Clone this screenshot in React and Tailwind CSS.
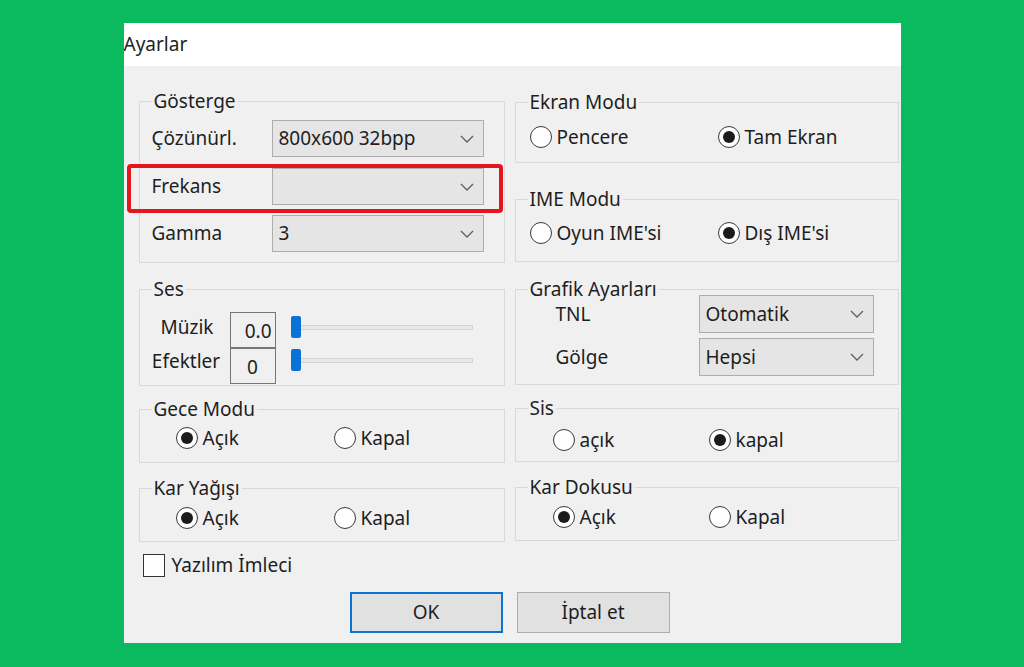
const FONT = { fontFamily: '"Noto Sans", "Open Sans", sans-serif' };

function Chevron() {
  return (
    <svg width="14" height="8" viewBox="0 0 14 8" fill="none">
      <path d="M1 1l6 6 6-6" stroke="#5f5f5f" strokeWidth="1.3" />
    </svg>
  );
}

function Select({ value, className = "" }) {
  return (
    <div
      className={
        "flex items-center justify-between border border-[#adadad] bg-[#e5e5e5] pl-[6px] pr-[9px] text-[19px] text-[#1e1e1e] " +
        className
      }
    >
      <span>{value}</span>
      <Chevron />
    </div>
  );
}

function Radio({ label, checked }) {
  return (
    <div className="flex items-center gap-[5px] h-[24px]">
      <span className="w-[22px] h-[22px] rounded-full border-[1.5px] border-[#3a3a3a] bg-white flex items-center justify-center">
        {checked && <span className="w-[12px] h-[12px] rounded-full bg-[#1b1b1b]" />}
      </span>
      <span className="text-[19px] text-[#1e1e1e] leading-none">{label}</span>
    </div>
  );
}

function Group({ title, className = "", children }) {
  return (
    <fieldset className={"border border-[#d9d9d9] " + className}>
      <legend className="ml-[12px] px-[2px] text-[19px] leading-[22px] text-[#1e1e1e]">{title}</legend>
      {children}
    </fieldset>
  );
}

function RadioPair({ a, b, first, pl, w, mt }) {
  return (
    <div className={"flex " + pl + " " + mt}>
      <div className={w}>
        <Radio label={a} checked={first} />
      </div>
      <Radio label={b} checked={!first} />
    </div>
  );
}

function Slider() {
  return (
    <div className="relative w-[182px] h-[22px] flex items-center">
      <div className="w-full h-[5px] bg-[#e7e7e7] border border-[#d4d4d4]" />
      <div className="absolute left-0 top-0 w-[10px] h-[22px] bg-[#0a74d6] rounded-[2px]" />
    </div>
  );
}

export default function App() {
  return (
    <div className="min-h-screen bg-[#0bb95f] flex justify-center pt-[23px]" style={FONT}>
      <div className="w-[777px] h-[620px] flex flex-col overflow-hidden">
        <div className="h-[43px] bg-white flex items-center text-[19px] text-[#222]">
          <span>Ayarlar</span>
        </div>
        <div className="flex-1 bg-[#f0f0f0] pl-[15px] pr-[2px] pt-[24px]">
          <div className="grid grid-cols-[366px_384px] gap-x-[10px]">
            {/* left column */}
            <div className="flex flex-col">
              <Group title="Gösterge" className="h-[173px]">
                <div className="flex items-center h-[37px] mt-[8px]">
                  <span className="pl-[12px] w-[132px] text-[19px] text-[#1e1e1e]">Çözünürl.</span>
                  <Select value="800x600 32bpp" className="w-[212px] h-[37px]" />
                </div>
                <div className="relative flex items-center h-[37px] mt-[11px]">
                  <span className="pl-[12px] w-[132px] text-[19px] text-[#1e1e1e]">Frekans</span>
                  <Select value="" className="w-[212px] h-[37px]" />
                  <div className="absolute -left-[13px] right-[1px] -top-[4px] -bottom-[8px] border-[4px] border-[#e3161b] rounded-[4px]" />
                </div>
                <div className="flex items-center h-[37px] mt-[10px]">
                  <span className="pl-[12px] w-[132px] text-[19px] text-[#1e1e1e]">Gamma</span>
                  <Select value="3" className="w-[212px] h-[37px]" />
                </div>
              </Group>

              <Group title="Ses" className="h-[108px] mt-[15px]">
                <div className="flex items-center mt-[12px]">
                  <span className="w-[90px] pl-[5px] pb-[6px] text-center text-[19px] text-[#1e1e1e]">Müzik</span>
                  <div className="w-[46px] h-[36px] border border-[#767676] flex items-end justify-end pr-[3px] pb-[2px] text-[19px] text-[#1e1e1e]">0.0</div>
                  <div className="ml-[15px] mb-[6px]">
                    <Slider />
                  </div>
                </div>
                <div className="flex items-center -mt-px">
                  <span className="w-[90px] pl-[3px] pb-[10px] text-center text-[19px] text-[#1e1e1e]">Efektler</span>
                  <div className="w-[46px] h-[36px] border border-[#767676] flex items-end justify-center pb-[2px] text-[19px] text-[#1e1e1e]">0</div>
                  <div className="ml-[15px] mb-[12px]">
                    <Slider />
                  </div>
                </div>
              </Group>

              <Group title="Gece Modu" className="h-[65px] mt-[12px]">
                <RadioPair a="Açık" b="Kapal" first pl="pl-[36px]" w="w-[158px]" mt="mt-[6px]" />
              </Group>

              <Group title="Kar Yağışı" className="h-[65px] mt-[14px]">
                <RadioPair a="Açık" b="Kapal" first pl="pl-[36px]" w="w-[158px]" mt="mt-[7px]" />
              </Group>
            </div>

            {/* right column */}
            <div className="flex flex-col">
              <Group title="Ekran Modu" className="h-[72px] mt-[1px]">
                <RadioPair a="Pencere" b="Tam Ekran" first={false} pl="pl-[14px]" w="w-[188px]" mt="mt-[12px]" />
              </Group>

              <Group title="IME Modu" className="h-[74px] mt-[25px]">
                <RadioPair a="Oyun IME'si" b="Dış IME'si" first={false} pl="pl-[14px]" w="w-[188px]" mt="mt-[11px]" />
              </Group>

              <Group title="Grafik Ayarları" className="h-[107px] mt-[16px]">
                <div className="flex items-center h-[38px] -mt-[5px]">
                  <span className="pl-[40px] w-[183px] text-[19px] text-[#1e1e1e]">TNL</span>
                  <Select value="Otomatik" className="w-[175px] h-[38px]" />
                </div>
                <div className="flex items-center h-[38px] mt-[5px]">
                  <span className="pl-[40px] w-[183px] text-[19px] text-[#1e1e1e]">Gölge</span>
                  <Select value="Hepsi" className="w-[175px] h-[38px]" />
                </div>
              </Group>

              <Group title="Sis" className="h-[65px] mt-[12px]">
                <RadioPair a="açık" b="kapal" first={false} pl="pl-[37px]" w="w-[156px]" mt="mt-[9px]" />
              </Group>

              <Group title="Kar Dokusu" className="h-[65px] mt-[14px]">
                <RadioPair a="Açık" b="Kapal" first pl="pl-[37px]" w="w-[156px]" mt="mt-[7px]" />
              </Group>
            </div>
          </div>

          <div className="flex items-center gap-[7px] ml-[4px] mt-[12px] h-[23px]">
            <span className="w-[22px] h-[23px] border-[1.5px] border-[#333] bg-white" />
            <span className="text-[19px] text-[#1e1e1e]">Yazılım İmleci</span>
          </div>

          <div className="grid grid-cols-[366px_384px] gap-x-[10px] mt-[15px]">
            <div className="justify-self-end mr-[2px] w-[153px] h-[41px] border-2 border-[#0a74d6] bg-[#e1e1e1] flex items-center justify-center text-[19px] text-[#1e1e1e]">
              OK
            </div>
            <div className="ml-[2px] w-[153px] h-[41px] border border-[#adadad] bg-[#e1e1e1] flex items-center justify-center text-[19px] text-[#1e1e1e]">
              İptal et
            </div>
          </div>
        </div>
      </div>
    </div>
  );
}
